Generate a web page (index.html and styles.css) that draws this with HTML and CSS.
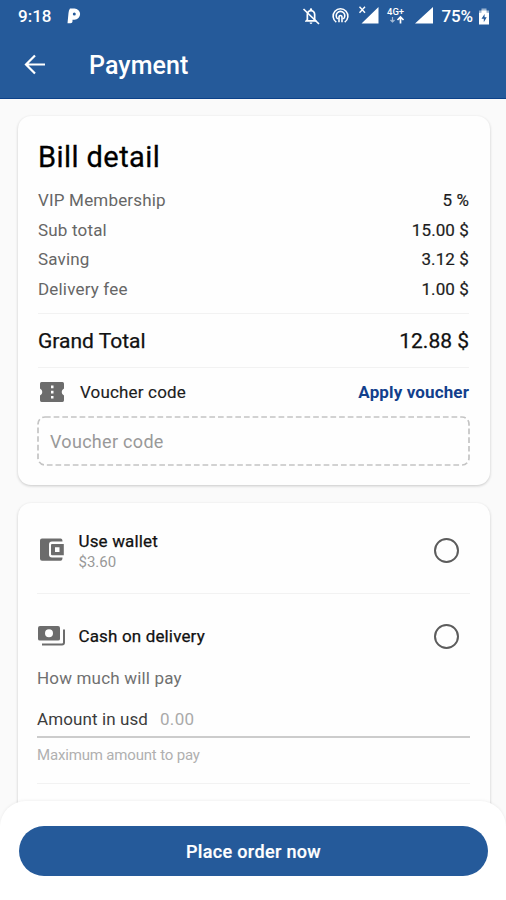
FILE: index.html
```html
<!DOCTYPE html>
<html lang="en">
<head>
<meta charset="utf-8">
<title>Payment</title>
<link rel="stylesheet" href="styles.css">
</head>
<body>
<div class="screen">
  <header class="top">
    <div class="status">
      <span class="clock">9:18</span>
      <svg class="p-icon" width="14" height="16" viewBox="0 0 14 16"><path fill="#fff" fill-rule="evenodd" d="M3 .5H7.500A5.600 5.600 0 0 1 7.500 11.700H5.500V13.500Q5.500 15.300 3.500 15.300H.5L1.500 5Q1.700 2 3 .5ZM7.300 4.600A1.500 1.500 0 1 0 7.300 7.600A1.500 1.500 0 1 0 7.300 4.600Z"/></svg>
      <svg class="tray" width="152" height="20" viewBox="0 0 152 20" fill="none" stroke="#fff">
        <path fill="#fff" stroke="none" fill-rule="evenodd" d="M5.500 13.500V8.500C5.500 6 7 4.400 8.800 4V3.400a1.200 1.200 0 0 1 2.400 0V4C13 4.400 14.500 6 14.500 8.500V13.500L16 15v.8H4V15ZM7.200 14H12.800V8.500C12.800 6.800 11.600 5.500 10 5.500S7.200 6.800 7.200 8.500ZM8.600 16.500h2.800a1.400 1.400 0 0 1-2.800 0Z"/>
        <path stroke-width="1.700" d="M2.500 3L18 18"/>
        <path stroke-width="1.600" d="M35.300 16.200A7.400 7.400 0 1 1 43.700 16.200M36.800 13A4.300 4.300 0 1 1 42.200 13M38 16.200V11.500Q38 9.500 39.500 9.500T41 11.500V16.200"/>
        <path fill="#fff" stroke="none" d="M77.500 1V17.500H60.500ZM132 1V17.500H114Z"/>
        <path stroke-width="1.400" d="M58.500 .8l5.500 5.900M64 .8l-5.500 5.900"/>
        <path stroke-width="1.700" d="M99.500 17.500V11.500M96.500 14l3-3 3 3"/>
        <path stroke-width="1.200" opacity=".6" d="M91.500 11v5M89.500 14l2 2 2-2"/>
        <text class="net" x="86" y="9">4G+</text>
      </svg>
      <span class="percent">75%</span>
      <svg class="battery" width="12" height="17" viewBox="0 0 12 17"><path fill="#fff" fill-rule="evenodd" d="M3.500 2.500h5v2H11v12H1V4.500h2.500ZM6.600 6L3.500 10.800h2.300v3.400L8.700 9.300H6.600Z"/><path fill="#fff" opacity=".55" d="M3.500 .5h5v2H11v2H1v-2h2.500Z"/></svg>
    </div>
    <div class="appbar">
      <svg width="22" height="20" viewBox="0 0 22 20" fill="none" stroke="#fff" stroke-width="2.200"><path d="M21 9.500H3M11 .5L2 9.500l9 9"/></svg>
      <h1>Payment</h1>
    </div>
  </header>

  <main class="content">
    <section class="card bill">
      <h2>Bill detail</h2>
      <dl class="rows">
        <div class="row"><dt>VIP Membership</dt><dd>5 %</dd></div>
        <div class="row"><dt>Sub total</dt><dd>15.00 $</dd></div>
        <div class="row"><dt>Saving</dt><dd>3.12 $</dd></div>
        <div class="row"><dt>Delivery fee</dt><dd>1.00 $</dd></div>
      </dl>
      <div class="total"><span>Grand Total</span><span>12.88 $</span></div>
      <div class="voucher-head">
        <svg width="26" height="20" viewBox="0 0 26 20"><path fill="#6c6c6c" fill-rule="evenodd" d="M2.500 0h21Q25 0 25 1.700V6.500Q22.700 7.500 22.700 10T25 13.500V18.300Q25 20 23.500 20h-21Q1 20 1 18.300V13.500Q3.300 12.500 3.300 10T1 6.500V1.700Q1 0 2.500 0ZM12 3.500v2.700h2.500V3.500ZM12 8.700v2.700h2.500V8.700ZM12 13.900v2.700h2.500v-2.700Z"/></svg>
        <span class="voucher-label">Voucher code</span>
        <a class="apply">Apply voucher</a>
      </div>
      <div class="voucher-box">
        <svg class="dashes" width="433" height="50" viewBox="0 0 433 50"><rect x="1" y="1" width="431" height="48" rx="7" fill="none" stroke="#c4c4c4" stroke-width="1.700" stroke-dasharray="5.700 2.950"/></svg>
        <span>Voucher code</span>
      </div>
    </section>

    <section class="card pay">
      <div class="method wallet">
        <svg width="28" height="26" viewBox="0 0 28 26"><path fill="#6c6c6c" fill-rule="evenodd" d="M4 1.500H22.500Q24.500 1.500 24.500 4.500H14Q11 4.500 11 7.500V17.500Q11 20.500 14 20.500H24.500Q24.500 23.800 22.500 23.800H4Q2 23.800 2 21.800V3.500Q2 1.500 4 1.500ZM14 7H25.800V18.200H14Q13 18.200 13 17.200V8Q13 7 14 7ZM17 10.200V15H21.500V10.200Z"/></svg>
        <div class="names"><span class="name n1">Use wallet</span><span class="sub">$3.60</span></div>
        <span class="radio"></span>
      </div>
      <div class="method cash">
        <svg width="28" height="22" viewBox="0 0 28 22"><path fill="#6c6c6c" fill-rule="evenodd" d="M2 1H20Q22 1 22 3V14Q22 15.500 20 15.500H2Q0 15.500 0 14V3Q0 1 2 1ZM11 4.200A4 4 0 1 0 11 12.200A4 4 0 1 0 11 4.200Z"/><path fill="none" stroke="#6c6c6c" stroke-width="2" d="M26 4.500V17.500Q26 19.500 24 19.500H4"/></svg>
        <div class="names"><span class="name n2">Cash on delivery</span></div>
        <span class="radio"></span>
      </div>
      <p class="question">How much will pay</p>
      <div class="amount"><label>Amount in usd</label><span>0.00</span></div>
      <p class="hint">Maximum amount to pay</p>
    </section>
  </main>

  <footer class="sheet"><button class="order">Place order now</button></footer>
</div>
</body>
</html>
```
FILE: styles.css
```css
* { box-sizing: border-box; }
body { margin: 0; font-family: Roboto, "Liberation Sans", sans-serif; background: #fafafa; color: #1c1c1c; }
h1, h2, p, dl, dd { margin: 0; }
svg { display: block; flex: none; overflow: visible; }
.screen { height: 900px; display: flex; flex-direction: column; overflow: hidden; }

.top { flex: none; height: 99px; background: #255a9a; border-bottom: 1px solid #0c4189; color: #fff; }
.status { display: flex; align-items: center; height: 32px; padding: 0 16px 0 18px; font-size: 17px; font-weight: 500; }
.clock { width: 50px; }
.tray { margin: -1px 0 0 220px; }
.net { font-size: 9.500px; font-weight: 500; fill: #fff; stroke: none; }
.percent { margin-left: -12px; width: 37px; letter-spacing: -.1px; }
.battery { margin-left: auto; }
.appbar { display: flex; align-items: center; height: 66px; padding-left: 24px; }
.appbar h1 { margin: 2px 0 0 43px; font-size: 25px; font-weight: 500; line-height: 30px; letter-spacing: .1px; }

.content { flex: 1; min-height: 0; padding: 17px 16px 0 18px; }
.card { background: #fefefe; border-radius: 13px; box-shadow: 0 1px 3px rgba(0,0,0,.2); }
.bill { height: 369px; padding: 23px 21px 0 20px; }
.bill h2 { font-size: 29px; font-weight: 400; line-height: 36px; color: #000; letter-spacing: .43px; -webkit-text-stroke: .3px; }
.rows { padding: 11px 0 9px; border-bottom: 1px solid #f2f2f2; }
.row { display: flex; justify-content: space-between; font-size: 17px; line-height: 29.500px; letter-spacing: .18px; }
.row dt { color: #666; }
.row dd { letter-spacing: .1px; -webkit-text-stroke: .2px; }
.total { display: flex; justify-content: space-between; height: 54px; align-items: center; border-bottom: 1px solid #f2f2f2; font-size: 21px; color: #111; -webkit-text-stroke: .25px; }
.voucher-head { display: flex; align-items: center; height: 48px; font-size: 17px; }
.voucher-head svg { margin-left: 1px; }
.voucher-label { margin-left: 15px; letter-spacing: .17px; -webkit-text-stroke: .15px; }
.apply { margin-left: auto; color: #123f8c; font-weight: 700; letter-spacing: .13px; }
.voucher-box { position: relative; height: 50px; width: 433px; margin-left: -1px; display: flex; align-items: center; padding-left: 13px; font-size: 18px; letter-spacing: .3px; color: #999; }
.dashes { position: absolute; inset: 0; }

.pay { margin-top: 18px; height: 400px; padding: 0 20px 0 19px; }
.method { display: flex; align-items: center; }
.method svg { margin-left: 1px; }
.wallet { height: 91px; padding-top: 4px; border-bottom: 1px solid #f2f2f2; }
.cash { height: 84px; }
.names { margin-left: 12.500px; display: flex; flex-direction: column; }
.wallet .names { padding-top: 2px; }
.name { font-size: 17px; line-height: 22px; letter-spacing: .15px; color: #111; -webkit-text-stroke: .25px; }
.sub { font-size: 15px; line-height: 20px; color: #999; }
.radio { margin: 0 11px 0 auto; width: 25px; height: 25px; border: 2px solid #5c5c5c; border-radius: 50%; }
.question { font-size: 17px; line-height: 22px; margin-top: -11px; letter-spacing: .18px; color: #707070; }
.amount { margin-top: 19px; height: 30px; border-bottom: 2px solid #ccc; display: flex; font-size: 17px; line-height: 22px; letter-spacing: .1px; color: #3c3c3c; }
.amount span { margin-left: 12px; letter-spacing: .3px; color: #aaa; }
.hint { font-size: 15px; line-height: 20px; letter-spacing: -.17px; color: #b0b0b0; padding: 7px 0 18px; border-bottom: 1px solid #f2f2f2; }

.sheet { position: relative; flex: none; height: 99px; padding: 25px 18px 0 19px; background: #fff; border-radius: 26px 26px 0 0; box-shadow: 0 -1px 3px rgba(0,0,0,.05); }
.order { display: block; width: 100%; height: 50px; border: 0; border-radius: 25px; background: #255a9a; color: #fff; font: 500 18px Roboto, sans-serif; letter-spacing: .35px; -webkit-text-stroke: .2px; }
```
